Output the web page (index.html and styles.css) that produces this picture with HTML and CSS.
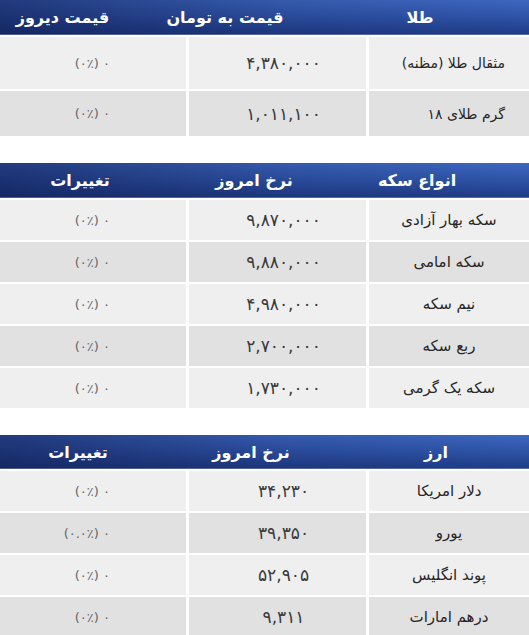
FILE: index.html
```html
<!DOCTYPE html>
<html lang="fa" dir="rtl">
<head>
<meta charset="utf-8">
<title>قیمت طلا، سکه و ارز</title>
<link rel="stylesheet" href="styles.css">
</head>
<body>
<section class="table table--gold">
  <div class="head">
    <div class="hc hc-1">طلا</div>
    <div class="hc hc-2">قیمت به تومان</div>
    <div class="hc hc-3">قیمت دیروز</div>
  </div>
  <div class="row row--light row--tall">
    <div class="c c-name">مثقال طلا (مظنه)</div>
    <div class="c c-price">۴,۳۸۰,۰۰۰</div>
    <div class="c c-change">۰ (۰٪)</div>
  </div>
  <div class="row row--dark row--mid">
    <div class="c c-name">گرم طلای ۱۸</div>
    <div class="c c-price">۱,۰۱۱,۱۰۰</div>
    <div class="c c-change">۰ (۰٪)</div>
  </div>
</section>

<section class="table table--coin">
  <div class="head">
    <div class="hc hc-1">انواع سکه</div>
    <div class="hc hc-2">نرخ امروز</div>
    <div class="hc hc-3">تغییرات</div>
  </div>
  <div class="row row--light">
    <div class="c c-name c-center">سکه بهار آزادی</div>
    <div class="c c-price">۹,۸۷۰,۰۰۰</div>
    <div class="c c-change">۰ (۰٪)</div>
  </div>
  <div class="row row--dark">
    <div class="c c-name c-center">سکه امامی</div>
    <div class="c c-price">۹,۸۸۰,۰۰۰</div>
    <div class="c c-change">۰ (۰٪)</div>
  </div>
  <div class="row row--light">
    <div class="c c-name c-center">نیم سکه</div>
    <div class="c c-price">۴,۹۸۰,۰۰۰</div>
    <div class="c c-change">۰ (۰٪)</div>
  </div>
  <div class="row row--dark">
    <div class="c c-name c-center">ربع سکه</div>
    <div class="c c-price">۲,۷۰۰,۰۰۰</div>
    <div class="c c-change">۰ (۰٪)</div>
  </div>
  <div class="row row--light">
    <div class="c c-name c-center">سکه یک گرمی</div>
    <div class="c c-price">۱,۷۳۰,۰۰۰</div>
    <div class="c c-change">۰ (۰٪)</div>
  </div>
</section>

<section class="table table--fx">
  <div class="head">
    <div class="hc hc-1">ارز</div>
    <div class="hc hc-2">نرخ امروز</div>
    <div class="hc hc-3">تغییرات</div>
  </div>
  <div class="row row--light">
    <div class="c c-name c-center">دلار امریکا</div>
    <div class="c c-price">۳۴,۲۳۰</div>
    <div class="c c-change">۰ (۰٪)</div>
  </div>
  <div class="row row--dark">
    <div class="c c-name c-center">یورو</div>
    <div class="c c-price">۳۹,۳۵۰</div>
    <div class="c c-change">۰ (۰.۰٪)</div>
  </div>
  <div class="row row--light">
    <div class="c c-name c-center">پوند انگلیس</div>
    <div class="c c-price">۵۲,۹۰۵</div>
    <div class="c c-change">۰ (۰٪)</div>
  </div>
  <div class="row row--dark">
    <div class="c c-name c-center">درهم امارات</div>
    <div class="c c-price">۹,۳۱۱</div>
    <div class="c c-change">۰ (۰٪)</div>
  </div>
</section>
</body>
</html>
```

FILE: styles.css
```css
html, body {
  margin: 0;
  padding: 0;
  background: #ffffff;
}

body {
  width: 529px;
  height: 635px;
  overflow: hidden;
  font-family: "DejaVu Sans", "Noto Sans", sans-serif;
  color: #333333;
}

.table {
  display: flex;
  flex-direction: column;
  gap: 2px;
  margin-bottom: 27px;
}

.head {
  display: grid;
  height: 35px;
  align-items: center;
  color: #ffffff;
  font-weight: bold;
  font-size: 16px;
  background:
    linear-gradient(to left, rgba(12, 22, 70, 0) 0%, rgba(12, 22, 70, 0.15) 45%, rgba(12, 22, 70, 0.55) 100%),
    linear-gradient(to bottom, #3d67c0 0%, #2c50a3 55%, #1f3b83 100%);
  box-shadow: inset 0 -1px 0 rgba(255, 255, 255, 0.25);
}

.table--gold .head { grid-template-columns: 218px 172px 1fr; }
.table--gold .hc-3 { padding-right: 14px; }

.table--coin .head { grid-template-columns: 224px 102px 1fr; }
.table--coin .hc-3 { padding-right: 43px; }

.table--fx .head { grid-template-columns: 186px 184px 1fr; height: 34px; }
.table--fx .hc-3 { padding-right: 3px; }

.hc {
  text-align: center;
  white-space: nowrap;
}

.row {
  display: grid;
  grid-template-columns: 160px 177px 1fr;
  column-gap: 3px;
  height: 40px;
}

.row--tall { height: 52px; }
.row--mid { height: 45px; }

.row--light .c { background: #efefef; }
.row--dark .c { background: #e1e1e1; }

.c {
  display: flex;
  align-items: center;
  white-space: nowrap;
}

.c-name {
  justify-content: flex-start;
  padding-right: 24px;
  font-size: 14px;
  color: #262626;
}

.c-center {
  justify-content: center;
  padding-right: 0;
  font-size: 15px;
}

.c-price {
  justify-content: center;
  padding-right: 0;
  padding-left: 12px;
  font-size: 17px;
  color: #3a3a3a;
  letter-spacing: 0.5px;
}

.c-change {
  justify-content: flex-start;
  padding-right: 76px;
  font-size: 13px;
  color: #666666;
}
```
